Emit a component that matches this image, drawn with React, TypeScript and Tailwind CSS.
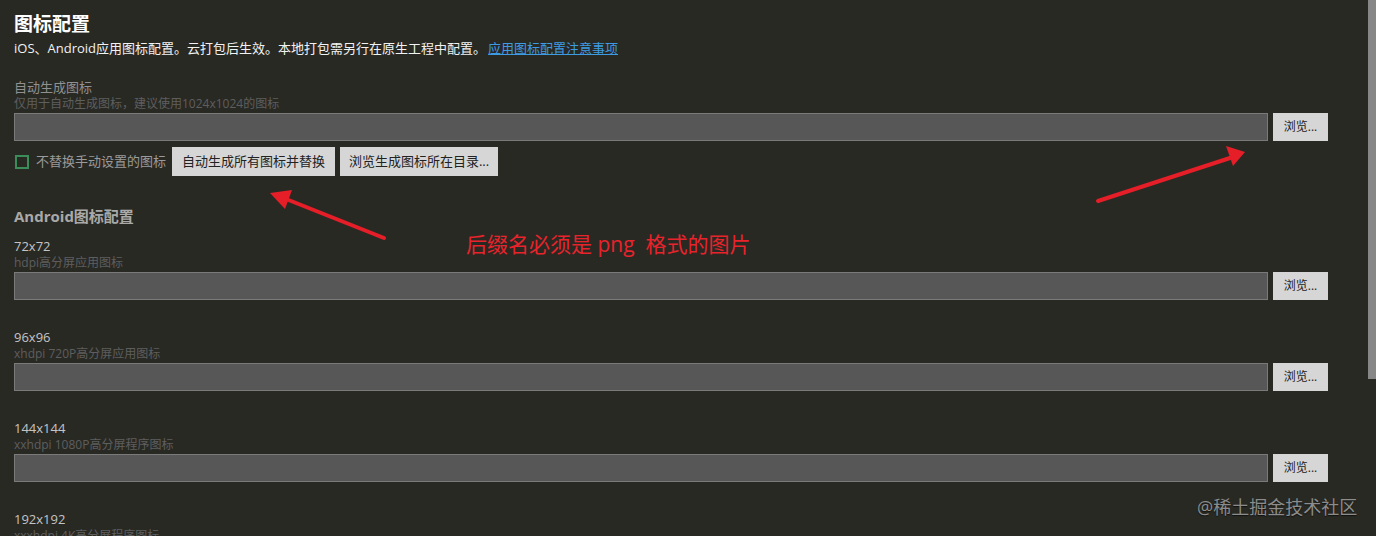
import type { ReactNode } from 'react';

const fontStack = { fontFamily: '"Open Sans", "Noto Sans CJK SC", sans-serif' };

const androidIcons = [
  { size: '72x72', hint: 'hdpi高分屏应用图标' },
  { size: '96x96', hint: 'xhdpi 720P高分屏应用图标' },
  { size: '144x144', hint: 'xxhdpi 1080P高分屏程序图标' },
  { size: '192x192', hint: 'xxxhdpi 4K高分屏程序图标' },
];

export default function App() {
  return (
    <div className="relative flex h-[536px] w-full overflow-hidden bg-[#292924]" style={fontStack}>
      <main className="min-w-0 flex-1 pl-[14px] pr-[40px] pt-[10px]">
        <h1 className="h-[28px] text-[19px] font-bold leading-[28px] text-white">图标配置</h1>
        <p className="h-[20px] text-[13px] leading-[20px] text-[#f2f2f2]">
          iOS、Android应用图标配置。云打包后生效。本地打包需另行在原生工程中配置。
          <a className="ml-[2px] text-[#3d9be3] underline">应用图标配置注意事项</a>
        </p>

        <div className="mt-[20px]">
          <Label>自动生成图标</Label>
          <Hint>仅用于自动生成图标，建议使用1024x1024的图标</Hint>
          <FileRow />
          <div className="mt-[6px] flex h-[29px] items-center">
            <span className="ml-[1px] box-border block h-[14px] w-[14px] shrink-0 border-2 border-solid border-[#3c8c5a]" />
            <span className="ml-[7px] text-[13px] text-[#9a9a9a]">不替换手动设置的图标</span>
            <GrayButton className="ml-[6px] h-[29px] w-[163px] text-[13px]">自动生成所有图标并替换</GrayButton>
            <GrayButton className="ml-[5px] h-[29px] w-[158px] text-[13px]">浏览生成图标所在目录...</GrayButton>
          </div>
        </div>

        <h2 className="mt-[30px] h-[20px] text-[15px] font-bold leading-[20px] text-[#a9a9a9]">Android图标配置</h2>

        <div className="mt-[11px] flex flex-col gap-[28px]">
          {androidIcons.map((icon) => (
            <section key={icon.size}>
              <div className="h-[18px] text-[13px] leading-[18px] text-[#c4c4c4]">{icon.size}</div>
              <Hint>{icon.hint}</Hint>
              <FileRow />
            </section>
          ))}
        </div>
      </main>

      <aside className="w-[8px] shrink-0">
        <div className="h-[379px] bg-[#878787]" />
      </aside>

      {/* annotations drawn over the screenshot */}
      <svg className="pointer-events-none absolute left-0 top-0" width="1376" height="536">
        <line x1="384" y1="238" x2="286" y2="199" stroke="#e61e28" strokeWidth="4" strokeLinecap="round" />
        <polygon points="270,193 292,190 285,209" fill="#e61e28" />
        <line x1="1098" y1="201" x2="1230" y2="158" stroke="#e61e28" strokeWidth="4" strokeLinecap="round" />
        <polygon points="1245,152 1226,146 1233,166" fill="#e61e28" />
      </svg>
      <div className="pointer-events-none absolute left-[466px] top-[230px] whitespace-pre text-[21px] leading-[28px] text-[#e8232b]">
        后缀名必须是 png  格式的图片
      </div>
      <div className="pointer-events-none absolute left-[1197px] top-[495px] text-[18px] leading-[24px] text-[#8c8c8c] [text-shadow:0_1px_1px_rgba(0,0,0,0.6)]">
        @稀土掘金技术社区
      </div>
    </div>
  );
}

function Label({ children }: { children: ReactNode }) {
  return <div className="h-[18px] text-[13px] leading-[18px] text-[#909090]">{children}</div>;
}

function Hint({ children }: { children: ReactNode }) {
  return <div className="h-[16px] text-[12px] leading-[16px] text-[#5e5e5e]">{children}</div>;
}

function FileRow() {
  return (
    <div className="mt-[1px] flex h-[28px] gap-[5px]">
      <div className="h-[28px] flex-1 border border-[#7a7a7a] bg-[#575757]" />
      <GrayButton className="h-[28px] w-[55px] text-[12px]">浏览...</GrayButton>
    </div>
  );
}

function GrayButton({ children, className }: { children: ReactNode; className: string }) {
  return (
    <button className={`flex items-center justify-center bg-[#d6d6d6] text-[#222] ${className}`}>
      {children}
    </button>
  );
}
